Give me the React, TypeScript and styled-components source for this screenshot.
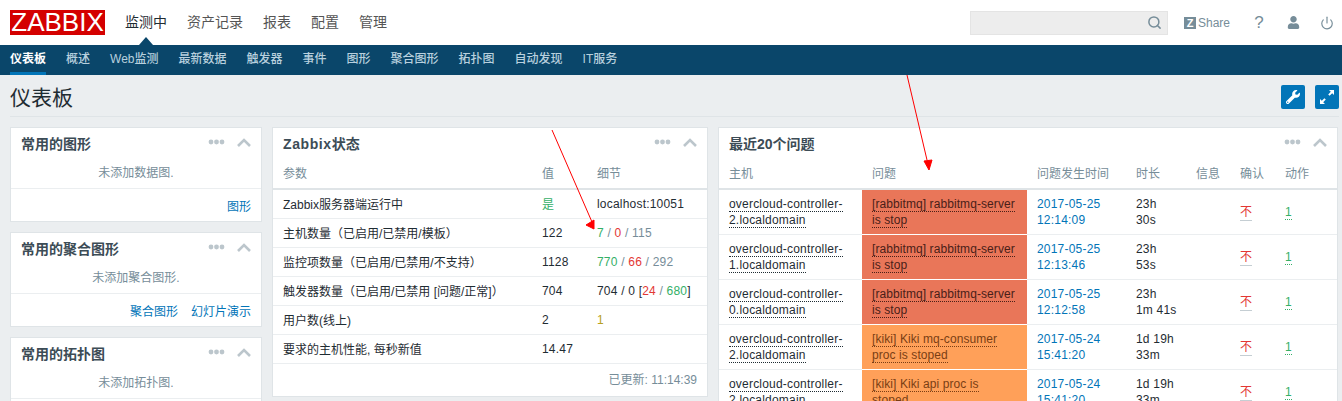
import React from 'react'
import styled, { createGlobalStyle } from 'styled-components'
import { Search, Power } from 'lucide-react'
import { FaWrench, FaUser } from 'react-icons/fa'

const GlobalStyle = createGlobalStyle`
  html, body {
    margin: 0;
    height: 401px;
    overflow: hidden;
    background: #ebeef0;
    color: #1f2c33;
    font-family: "Liberation Sans", "Noto Sans CJK SC", Arial, sans-serif;
    font-size: 12px;
    text-spacing-trim: space-all;
  }
`

const Page = styled.div`
  position: relative;
  width: 1342px;
  height: 401px;
  overflow: hidden;
`

const TopBar = styled.header`
  display: flex;
  align-items: center;
  height: 45px;
  padding: 0 0 0 10px;
  background: #fff;
`

const Logo = styled.div`
  width: 95px;
  height: 25px;
  margin-right: 20px;
  background: #d40000;
  color: #fff;
  font-size: 26px;
  line-height: 25px;
  text-align: center;
`

const MainNav = styled.nav`
  display: flex;
  gap: 20px;
  flex: 1;
`

const MainItem = styled.span<{ $active?: boolean }>`
  position: relative;
  font-size: 14px;
  line-height: 45px;
  color: ${(p) => (p.$active ? '#1f2c33' : '#555')};

  ${(p) =>
    p.$active &&
    `&::after {
      content: '';
      position: absolute;
      left: 50%;
      bottom: 0;
      margin-left: -7px;
      border-left: 7px solid transparent;
      border-right: 7px solid transparent;
      border-bottom: 8px solid #0a466a;
    }`}
`

const SearchBox = styled.div`
  display: flex;
  align-items: center;
  justify-content: flex-end;
  box-sizing: border-box;
  width: 198px;
  height: 24px;
  padding-right: 5px;
  margin-right: 16px;
  background: #ededed;
  border: 1px solid #e4e4e4;
  color: #768d99;
`

const ShareLink = styled.div`
  display: flex;
  align-items: center;
  gap: 2px;
  width: 56px;
  color: #768d99;
`

const ShareMark = styled.span`
  width: 12px;
  height: 12px;
  background: #768d99;
  color: #fff;
  font-size: 11px;
  font-weight: bold;
  line-height: 12px;
  text-align: center;
`

const IconSlot = styled.span`
  display: flex;
  align-items: center;
  justify-content: center;
  width: 30px;
  margin-left: 4px;
  color: #768d99;
  font-size: 17px;
`

const TabBar = styled.nav`
  display: flex;
  gap: 20px;
  height: 30px;
  padding-left: 10px;
  background: #0a466a;
`

const Tab = styled.span<{ $active?: boolean }>`
  box-sizing: border-box;
  height: 30px;
  line-height: 29px;
  font-weight: ${(p) => (p.$active ? 'bold' : '500')};
  color: ${(p) => (p.$active ? '#fff' : '#b8d0de')};
  border-bottom: 3px solid ${(p) => (p.$active ? '#0275b8' : 'transparent')};
`

const Content = styled.main`
  padding: 0 3px 0 10px;
`

const TitleRow = styled.div`
  display: flex;
  justify-content: space-between;
  box-sizing: border-box;
  height: 42px;
  padding-top: 10px;
  border-bottom: 1px solid #dfe4e7;
`

const PageTitle = styled.h1`
  margin: 0;
  font-size: 21px;
  font-weight: normal;
  line-height: 26px;
`

const TitleButtons = styled.div`
  display: flex;
  gap: 10px;
`

const SquareButton = styled.span`
  display: flex;
  align-items: center;
  justify-content: center;
  width: 24px;
  height: 24px;
  border-radius: 2px;
  background: #0275b8;
  color: #fff;
`

const Board = styled.div`
  display: grid;
  grid-template-columns: 252px 436px 620px;
  gap: 10px;
  margin-top: 10px;
  width: 1328px;
  align-items: start;
`

const Column = styled.div`
  display: flex;
  flex-direction: column;
  gap: 10px;
`

const Card = styled.section`
  background: #fff;
  border: 1px solid #dfe4e7;
`

const CardHead = styled.div`
  display: flex;
  align-items: center;
  box-sizing: border-box;
  height: 33px;
  padding: 0 10px 4px 10px;
`

const CardTitle = styled.h4`
  flex: 1;
  margin: 0;
  font-size: 14px;
  font-weight: bold;
  color: #3c4c56;
`

const LatinTitle = styled.span`
  letter-spacing: 0.6px;
`

const CardTools = styled.span`
  display: flex;
  align-items: center;
  gap: 12px;
  margin-top: -1px;
`

const EmptyMessage = styled.div`
  height: 27px;
  line-height: 24px;
  text-align: center;
  color: #768d99;
`

const CardFooter = styled.div`
  display: flex;
  justify-content: flex-end;
  align-items: center;
  gap: 13px;
  box-sizing: border-box;
  height: 33px;
  padding: 0 10px;
  border-top: 1px solid #ebeef0;
  color: #0275b8;
`

const UpdatedFooter = styled.div`
  box-sizing: border-box;
  height: 32px;
  padding: 0 10px;
  line-height: 32px;
  text-align: right;
  color: #768d99;
`

const Table = styled.table`
  width: 100%;
  table-layout: fixed;
  border-collapse: collapse;
`

const HeadCell = styled.th`
  height: 28px;
  padding: 0 0 4px 10px;
  box-sizing: border-box;
  font-weight: normal;
  text-align: left;
  color: #768d99;
  border-bottom: 2px solid #dfe4e7;
`

const StatusCell = styled.td`
  height: 29px;
  box-sizing: border-box;
  padding: 0 0 0 10px;
  border-bottom: 1px solid #ebeef0;
`

const ValueCell = styled(StatusCell)`
  letter-spacing: 0.2px;
`

const ProblemCell = styled.td`
  height: 45px;
  box-sizing: border-box;
  padding: 6px 10px;
  line-height: 16px;
  letter-spacing: 0.2px;
  border-bottom: 1px solid #ebeef0;
  vertical-align: middle;
`

const DurationCell = styled(ProblemCell)`
  white-space: nowrap;
`

const Severity = styled(ProblemCell)<{ $level: 'high' | 'average' }>`
  padding-right: 11px;
  letter-spacing: 0.08px;
  background: ${(p) => (p.$level === 'high' ? '#e97659' : '#ffa059')};
  color: ${(p) => (p.$level === 'high' ? '#4a2018' : '#7a3e14')};
  border-bottom-color: #fff;
`

const MenuLink = styled.span`
  border-bottom: 1px dotted currentColor;
`

const HostLink = styled(MenuLink)`
  border-bottom-color: #1f2c33;
`

const TimeLink = styled.span`
  color: #0275b8;
`

const AckLink = styled.span`
  color: #e33734;
  padding-bottom: 1px;
  border-bottom: 1px solid #c5ced3;
`

const ActionLink = styled.span`
  color: #34af67;
  border-bottom: 1px dotted #34af67;
`

const Tone = styled.span<{ $tone: 'green' | 'red' | 'grey' | 'yellow' }>`
  color: ${(p) =>
    ({ green: '#34af67', red: '#e33734', grey: '#768d99', yellow: '#b8a020' })[p.$tone]};
`

const Slash = styled.span`
  color: #768d99;
`

const Annotations = styled.svg`
  position: absolute;
  left: 0;
  top: 0;
  pointer-events: none;
`

const CardControls = () => (
  <CardTools>
    <svg width="17" height="6" viewBox="0 0 17 6">
      <g fill="#bcc6cc">
        <circle cx="3" cy="3" r="2.4" />
        <circle cx="8.5" cy="3" r="2.4" />
        <circle cx="14" cy="3" r="2.4" />
      </g>
    </svg>
    <svg width="14" height="9" viewBox="0 0 14 9">
      <path d="M1 8 L7 2 L13 8" fill="none" stroke="#bcc6cc" strokeWidth="2.6" />
    </svg>
  </CardTools>
)

const topItems = ['资产记录', '报表', '配置', '管理']
const tabs = ['概述', 'Web监测', '最新数据', '触发器', '事件', '图形', '聚合图形', '拓扑图', '自动发现', 'IT服务']

const shortcuts = [
  { title: '常用的图形', empty: '未添加数据图.', links: ['图形'] },
  { title: '常用的聚合图形', empty: '未添加聚合图形.', links: ['聚合图形', '幻灯片演示'] },
  { title: '常用的拓扑图', empty: '未添加拓扑图.', links: ['拓扑图'] },
]

const problems = [
  { host: 'overcloud-controller-2.localdomain', level: 'high', text: '[rabbitmq] rabbitmq-server is stop', date: '2017-05-25', time: '12:14:09', age: ['23h', '30s'] },
  { host: 'overcloud-controller-1.localdomain', level: 'high', text: '[rabbitmq] rabbitmq-server is stop', date: '2017-05-25', time: '12:13:46', age: ['23h', '53s'] },
  { host: 'overcloud-controller-0.localdomain', level: 'high', text: '[rabbitmq] rabbitmq-server is stop', date: '2017-05-25', time: '12:12:58', age: ['23h', '1m 41s'] },
  { host: 'overcloud-controller-2.localdomain', level: 'average', text: '[kiki] Kiki mq-consumer proc is stoped', date: '2017-05-24', time: '15:41:20', age: ['1d 19h', '33m'] },
  { host: 'overcloud-controller-2.localdomain', level: 'average', text: '[kiki] Kiki api proc is stoped', date: '2017-05-24', time: '15:41:20', age: ['1d 19h', '33m'] },
] as const

const App: React.FC = () => (
  <Page>
    <GlobalStyle />
    <TopBar>
      <Logo>ZABBIX</Logo>
      <MainNav>
        <MainItem $active>监测中</MainItem>
        {topItems.map((item) => (
          <MainItem key={item}>{item}</MainItem>
        ))}
      </MainNav>
      <SearchBox>
        <Search size={15} strokeWidth={2.4} />
      </SearchBox>
      <ShareLink>
        <ShareMark>Z</ShareMark>
        <span>Share</span>
      </ShareLink>
      <IconSlot>?</IconSlot>
      <IconSlot>
        <FaUser size={13} />
      </IconSlot>
      <IconSlot>
        <Power size={14} strokeWidth={2} />
      </IconSlot>
    </TopBar>
    <TabBar>
      <Tab $active>仪表板</Tab>
      {tabs.map((tab) => (
        <Tab key={tab}>{tab}</Tab>
      ))}
    </TabBar>
    <Content>
      <TitleRow>
        <PageTitle>仪表板</PageTitle>
        <TitleButtons>
          <SquareButton>
            <FaWrench size={14} />
          </SquareButton>
          <SquareButton>
            <svg width="16" height="16" viewBox="0 0 16 16" fill="#fff">
              <path d="M10 1 H15 V6 L13.2 4.2 L10.6 6.8 L9.2 5.4 L11.8 2.8 Z" />
              <path d="M6 15 H1 V10 L2.8 11.8 L5.4 9.2 L6.8 10.6 L4.2 13.2 Z" />
            </svg>
          </SquareButton>
        </TitleButtons>
      </TitleRow>
      <Board>
        <Column>
          {shortcuts.map((s) => (
            <Card key={s.title}>
              <CardHead>
                <CardTitle>{s.title}</CardTitle>
                <CardControls />
              </CardHead>
              <EmptyMessage>{s.empty}</EmptyMessage>
              <CardFooter>
                {s.links.map((link) => (
                  <span key={link}>{link}</span>
                ))}
              </CardFooter>
            </Card>
          ))}
        </Column>
        <Card>
          <CardHead>
            <CardTitle><LatinTitle>Zabbix</LatinTitle>状态</CardTitle>
            <CardControls />
          </CardHead>
          <Table>
            <colgroup>
              <col width="259" />
              <col width="55" />
              <col />
            </colgroup>
            <thead>
              <tr>
                <HeadCell>参数</HeadCell>
                <HeadCell>值</HeadCell>
                <HeadCell>细节</HeadCell>
              </tr>
            </thead>
            <tbody>
              <tr>
                <StatusCell>Zabbix服务器端运行中</StatusCell>
                <ValueCell><Tone $tone="green">是</Tone></ValueCell>
                <ValueCell>localhost:10051</ValueCell>
              </tr>
              <tr>
                <StatusCell>主机数量（已启用/已禁用/模板）</StatusCell>
                <ValueCell>122</ValueCell>
                <ValueCell>
                  <Tone $tone="green">7</Tone> <Slash>/</Slash> <Tone $tone="red">0</Tone> <Slash>/</Slash> <Tone $tone="grey">115</Tone>
                </ValueCell>
              </tr>
              <tr>
                <StatusCell>监控项数量（已启用/已禁用/不支持）</StatusCell>
                <ValueCell>1128</ValueCell>
                <ValueCell>
                  <Tone $tone="green">770</Tone> <Slash>/</Slash> <Tone $tone="red">66</Tone> <Slash>/</Slash> <Tone $tone="grey">292</Tone>
                </ValueCell>
              </tr>
              <tr>
                <StatusCell>触发器数量（已启用/已禁用 [问题/正常]）</StatusCell>
                <ValueCell>704</ValueCell>
                <ValueCell>
                  704 / 0 [<Tone $tone="red">24</Tone> <Slash>/</Slash> <Tone $tone="green">680</Tone>]
                </ValueCell>
              </tr>
              <tr>
                <StatusCell>用户数(线上)</StatusCell>
                <ValueCell>2</ValueCell>
                <ValueCell><Tone $tone="yellow">1</Tone></ValueCell>
              </tr>
              <tr>
                <StatusCell>要求的主机性能, 每秒新值</StatusCell>
                <ValueCell>14.47</ValueCell>
                <ValueCell />
              </tr>
            </tbody>
          </Table>
          <UpdatedFooter>已更新: 11:14:39</UpdatedFooter>
        </Card>
        <Card>
          <CardHead>
            <CardTitle>最近20个问题</CardTitle>
            <CardControls />
          </CardHead>
          <Table>
            <colgroup>
              <col width="143" />
              <col width="165" />
              <col width="99" />
              <col width="60" />
              <col width="44" />
              <col width="45" />
              <col />
            </colgroup>
            <thead>
              <tr>
                <HeadCell>主机</HeadCell>
                <HeadCell>问题</HeadCell>
                <HeadCell>问题发生时间</HeadCell>
                <HeadCell>时长</HeadCell>
                <HeadCell>信息</HeadCell>
                <HeadCell>确认</HeadCell>
                <HeadCell>动作</HeadCell>
              </tr>
            </thead>
            <tbody>
              {problems.map((p, i) => (
                <tr key={i}>
                  <ProblemCell><HostLink>{p.host}</HostLink></ProblemCell>
                  <Severity $level={p.level}><MenuLink>{p.text}</MenuLink></Severity>
                  <ProblemCell>
                    <TimeLink>{p.date}<br />{p.time}</TimeLink>
                  </ProblemCell>
                  <DurationCell>{p.age[0]}<br />{p.age[1]}</DurationCell>
                  <ProblemCell />
                  <ProblemCell><AckLink>不</AckLink></ProblemCell>
                  <ProblemCell><ActionLink>1</ActionLink></ProblemCell>
                </tr>
              ))}
            </tbody>
          </Table>
        </Card>
      </Board>
    </Content>
    <Annotations width="1342" height="401" viewBox="0 0 1342 401">
      <g stroke="#f00" fill="#f00">
        <line x1="552" y1="130" x2="592" y2="222" strokeWidth="1" />
        <path d="M586 225 L594 220 L594 229 Z" strokeWidth="1" />
        <line x1="907" y1="75" x2="927" y2="160" strokeWidth="1" />
        <path d="M924 161 L932 160 L929 170 Z" strokeWidth="1" />
      </g>
    </Annotations>
  </Page>
)

export default App
